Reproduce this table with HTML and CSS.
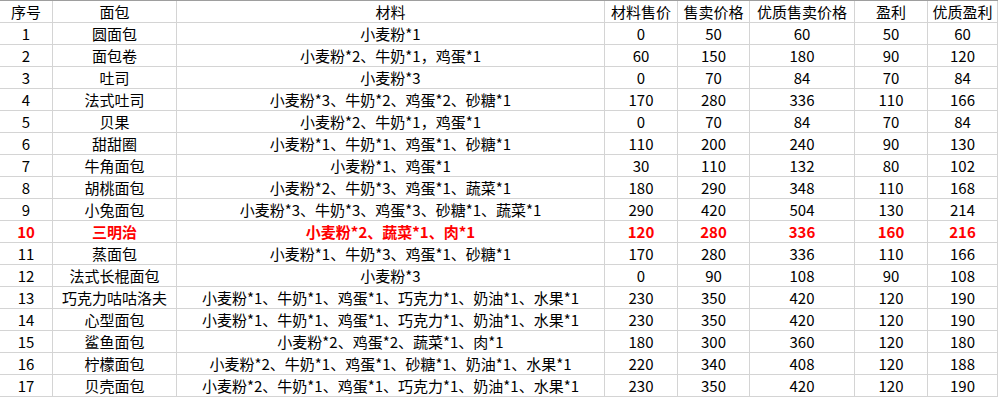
FILE: index.html
```html
<!DOCTYPE html>
<html lang="zh">
<head>
<meta charset="utf-8">
<link rel="stylesheet" href="styles.css">
</head>
<body>
<div class="sheet">
  <div class="row head">
    <div class="c">序号</div><div class="c">面包</div><div class="c">材料</div><div class="c">材料售价</div><div class="c">售卖价格</div><div class="c">优质售卖价格</div><div class="c">盈利</div><div class="c">优质盈利</div>
  </div>
  <div class="row"><div class="c">1</div><div class="c">圆面包</div><div class="c">小麦粉*1</div><div class="c">0</div><div class="c">50</div><div class="c">60</div><div class="c">50</div><div class="c">60</div></div>
  <div class="row"><div class="c">2</div><div class="c">面包卷</div><div class="c">小麦粉*2、牛奶*1，鸡蛋*1</div><div class="c">60</div><div class="c">150</div><div class="c">180</div><div class="c">90</div><div class="c">120</div></div>
  <div class="row"><div class="c">3</div><div class="c">吐司</div><div class="c">小麦粉*3</div><div class="c">0</div><div class="c">70</div><div class="c">84</div><div class="c">70</div><div class="c">84</div></div>
  <div class="row"><div class="c">4</div><div class="c">法式吐司</div><div class="c">小麦粉*3、牛奶*2、鸡蛋*2、砂糖*1</div><div class="c">170</div><div class="c">280</div><div class="c">336</div><div class="c">110</div><div class="c">166</div></div>
  <div class="row"><div class="c">5</div><div class="c">贝果</div><div class="c">小麦粉*2、牛奶*1，鸡蛋*1</div><div class="c">0</div><div class="c">70</div><div class="c">84</div><div class="c">70</div><div class="c">84</div></div>
  <div class="row"><div class="c">6</div><div class="c">甜甜圈</div><div class="c">小麦粉*1、牛奶*1、鸡蛋*1、砂糖*1</div><div class="c">110</div><div class="c">200</div><div class="c">240</div><div class="c">90</div><div class="c">130</div></div>
  <div class="row"><div class="c">7</div><div class="c">牛角面包</div><div class="c">小麦粉*1、鸡蛋*1</div><div class="c">30</div><div class="c">110</div><div class="c">132</div><div class="c">80</div><div class="c">102</div></div>
  <div class="row"><div class="c">8</div><div class="c">胡桃面包</div><div class="c">小麦粉*2、牛奶*3、鸡蛋*1、蔬菜*1</div><div class="c">180</div><div class="c">290</div><div class="c">348</div><div class="c">110</div><div class="c">168</div></div>
  <div class="row"><div class="c">9</div><div class="c">小兔面包</div><div class="c">小麦粉*3、牛奶*3、鸡蛋*3、砂糖*1、蔬菜*1</div><div class="c">290</div><div class="c">420</div><div class="c">504</div><div class="c">130</div><div class="c">214</div></div>
  <div class="row hot"><div class="c">10</div><div class="c">三明治</div><div class="c">小麦粉*2、蔬菜*1、肉*1</div><div class="c">120</div><div class="c">280</div><div class="c">336</div><div class="c">160</div><div class="c">216</div></div>
  <div class="row"><div class="c">11</div><div class="c">蒸面包</div><div class="c">小麦粉*1、牛奶*3、鸡蛋*1、砂糖*1</div><div class="c">170</div><div class="c">280</div><div class="c">336</div><div class="c">110</div><div class="c">166</div></div>
  <div class="row"><div class="c">12</div><div class="c">法式长棍面包</div><div class="c">小麦粉*3</div><div class="c">0</div><div class="c">90</div><div class="c">108</div><div class="c">90</div><div class="c">108</div></div>
  <div class="row"><div class="c">13</div><div class="c">巧克力咕咕洛夫</div><div class="c">小麦粉*1、牛奶*1、鸡蛋*1、巧克力*1、奶油*1、水果*1</div><div class="c">230</div><div class="c">350</div><div class="c">420</div><div class="c">120</div><div class="c">190</div></div>
  <div class="row"><div class="c">14</div><div class="c">心型面包</div><div class="c">小麦粉*1、牛奶*1、鸡蛋*1、巧克力*1、奶油*1、水果*1</div><div class="c">230</div><div class="c">350</div><div class="c">420</div><div class="c">120</div><div class="c">190</div></div>
  <div class="row"><div class="c">15</div><div class="c">鲨鱼面包</div><div class="c">小麦粉*2、鸡蛋*2、蔬菜*1、肉*1</div><div class="c">180</div><div class="c">300</div><div class="c">360</div><div class="c">120</div><div class="c">180</div></div>
  <div class="row"><div class="c">16</div><div class="c">柠檬面包</div><div class="c">小麦粉*2、牛奶*1、鸡蛋*1、砂糖*1、奶油*1、水果*1</div><div class="c">220</div><div class="c">340</div><div class="c">408</div><div class="c">120</div><div class="c">188</div></div>
  <div class="row"><div class="c">17</div><div class="c">贝壳面包</div><div class="c">小麦粉*2、牛奶*1、鸡蛋*1、巧克力*1、奶油*1、水果*1</div><div class="c">230</div><div class="c">350</div><div class="c">420</div><div class="c">120</div><div class="c">190</div></div>
</div>
</body>
</html>
```

FILE: styles.css
```css
html, body {
  margin: 0;
  padding: 0;
  background: #ffffff;
}
body {
  font-family: "Noto Sans CJK SC", "Microsoft YaHei", sans-serif;
  font-size: 15px;
  color: #000000;
}
.sheet {
  width: 998px;
  display: flex;
  flex-direction: column;
}
.row {
  display: grid;
  grid-template-columns: 53px 124px 428px 73px 72px 105px 73px 70px;
  height: 22px;
}
.row.head {
  height: 23px;
  border-top: 1px solid #9e9e9e;
  box-sizing: border-box;
}
.c {
  box-sizing: border-box;
  border-right: 1px solid #d4d4d4;
  border-bottom: 1px solid #d4d4d4;
  display: flex;
  align-items: center;
  justify-content: center;
  white-space: nowrap;
  overflow: hidden;
  line-height: 21px;
}
.row.hot .c {
  color: #ff0000;
  font-weight: bold;
}
```
